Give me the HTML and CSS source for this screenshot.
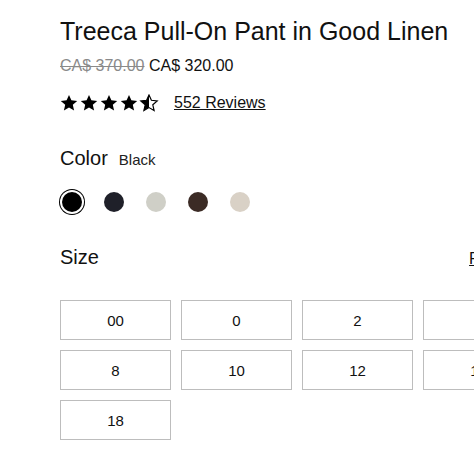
FILE: index.html
```html
<!DOCTYPE html>
<html lang="en">
  <head>
    <meta charset="UTF-8" />
    <title>Treeca Pull-On Pant in Good Linen</title>
    <link rel="stylesheet" href="styles.css">
  </head>
  <body>
    <div class="product">
      <h1 class="title">Treeca Pull-On Pant in Good Linen</h1>
      <p class="price">
        <s class="price-old">CA$ 370.00</s>
        <span class="price-now">CA$ 320.00</span>
      </p>

      <div class="rating">
        <svg class="stars" width="100" height="18" viewBox="0 0 100 18">
          <defs>
            <path id="star" d="M9 1l2.4 5.3 5.8.6-4.4 3.9 1.3 5.7L9 13.6l-5.1 2.9 1.3-5.7L.8 6.9l5.8-.6z" />
            <clipPath id="half"><rect x="0" y="0" width="9" height="18" /></clipPath>
          </defs>
          <use href="#star" x="0" />
          <use href="#star" x="20" />
          <use href="#star" x="40" />
          <use href="#star" x="60" />
          <g transform="translate(80 0)">
            <use href="#star" fill="none" stroke="#000" stroke-width="1.2" />
            <use href="#star" clip-path="url(#half)" />
          </g>
        </svg>
        <a href="#" class="reviews">552 Reviews</a>
      </div>

      <div class="option-head">
        <span class="option-name">Color</span>
        <span class="option-value">Black</span>
      </div>
      <div class="swatches">
        <button class="swatch selected" style="--c: #000000" title="Black"></button>
        <button class="swatch" style="--c: #1f2029" title="Navy"></button>
        <button class="swatch" style="--c: #cfcfc7" title="Stone"></button>
        <button class="swatch" style="--c: #3b2b25" title="Chocolate"></button>
        <button class="swatch" style="--c: #d9d1c6" title="Sand"></button>
      </div>

      <div class="option-head size-head">
        <span class="option-name">Size</span>
        <a href="#" class="size-guide">Fit Guide</a>
      </div>
      <div class="sizes">
        <button class="size">00</button>
        <button class="size">0</button>
        <button class="size">2</button>
        <button class="size">4</button>
        <button class="size">8</button>
        <button class="size">10</button>
        <button class="size">12</button>
        <button class="size">14</button>
        <button class="size">18</button>
      </div>
    </div>
  </body>
</html>
```

FILE: styles.css
```css
body {
  margin: 0;
  font-family: "Liberation Sans", Arial, sans-serif;
  color: #111;
  background: #fff;
  overflow: hidden;
}
.product {
  padding: 16px 0 0 60px;
  width: 474px;
}
.title {
  font-size: 25px;
  font-weight: 400;
  line-height: 30px;
  margin: 0;
  white-space: nowrap;
}
.price {
  margin: 10px 0 0;
  font-size: 16px;
  line-height: 20px;
}
.price-old {
  color: #8a8a8a;
}
.rating {
  display: flex;
  align-items: center;
  gap: 14px;
  margin-top: 16px;
  height: 22px;
}
.stars {
  display: block;
}
.reviews {
  color: #111;
  font-size: 16px;
}
.option-head {
  display: flex;
  align-items: baseline;
  gap: 11px;
  margin-top: 32px;
  line-height: 24px;
}
.option-name {
  font-size: 20px;
}
.option-value {
  font-size: 15px;
  color: #222;
}
.swatches {
  display: flex;
  gap: 22px;
  margin-top: 20px;
  padding-left: 2px;
}
.swatch {
  width: 20px;
  height: 20px;
  border-radius: 50%;
  border: none;
  padding: 0;
  background: var(--c);
  cursor: pointer;
}
.swatch.selected {
  box-shadow: 0 0 0 2px #fff, 0 0 0 3px #000;
}
.size-head {
  justify-content: space-between;
  margin-top: 33px;
}
.size-guide {
  color: #111;
  font-size: 16px;
}
.sizes {
  display: grid;
  grid-template-columns: repeat(4, 111px);
  gap: 10px;
  margin-top: 29px;
}
.size {
  height: 40px;
  border: 1px solid #bdbdbd;
  background: #fff;
  font-family: inherit;
  font-size: 15px;
  color: #111;
  cursor: pointer;
}
```
